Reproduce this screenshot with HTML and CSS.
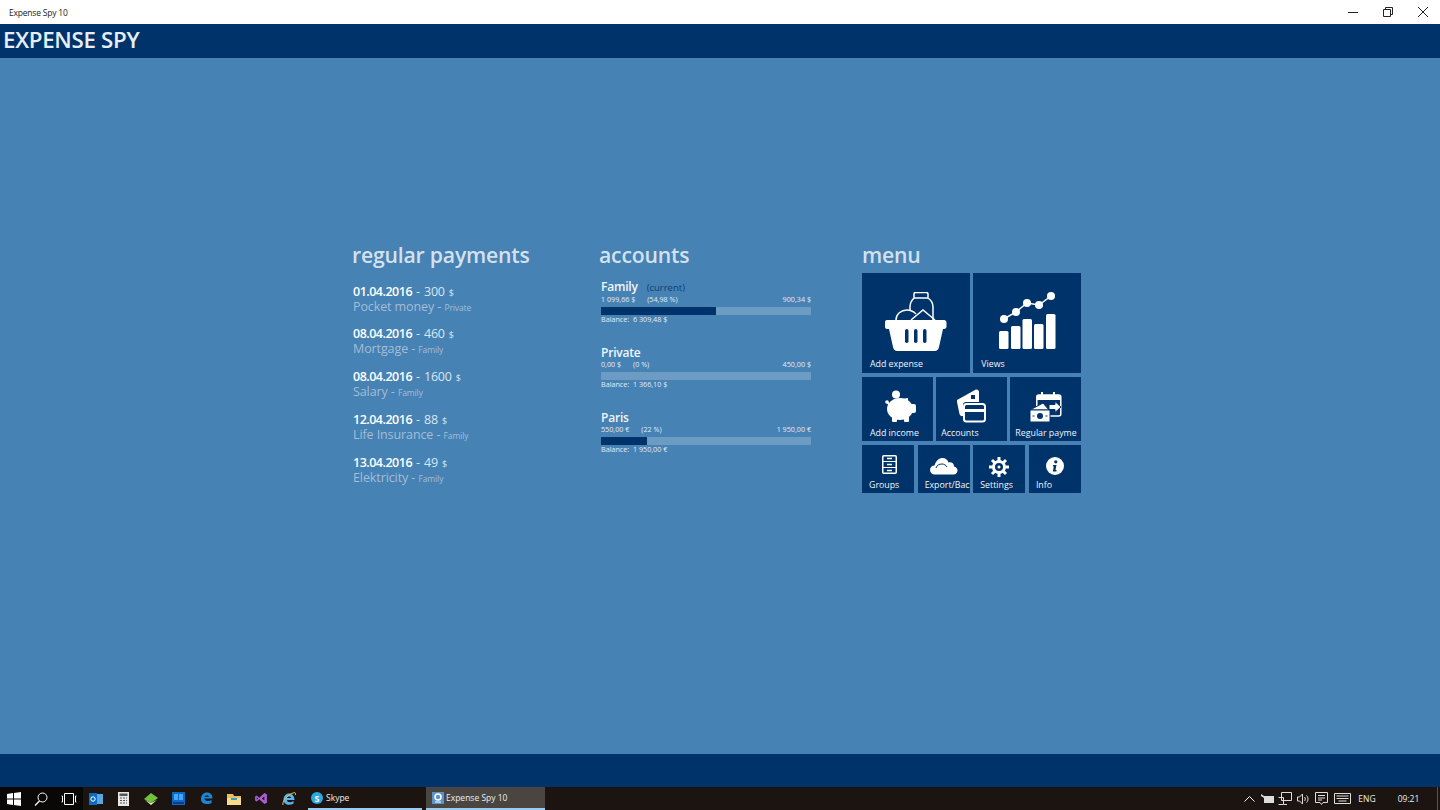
FILE: index.html
```html
<!DOCTYPE html>
<html lang="en">

<head>
    <meta charset="UTF-8">
    <meta name="viewport" content="width=device-width, initial-scale=1.0">
    <title>Expense Spy 10</title>
    <link rel="stylesheet" href="styles.css">
</head>

<body>
    <div class="titlebar">
        <span class="window-title">Expense Spy 10</span>
        <div class="window-buttons">
            <svg width="10" height="10" viewBox="0 0 10 10"><path d="M0 5.500h10" stroke="#222" fill="none"/></svg>
            <svg width="10" height="10" viewBox="0 0 10 10"><path d="M.5 2.500h7v7h-7zM2.500 2.500v-2h7v7h-2" stroke="#222" fill="none"/></svg>
            <svg width="10" height="10" viewBox="0 0 10 10"><path d="M0 0l10 10M10 0L0 10" stroke="#222" fill="none"/></svg>
        </div>
    </div>

    <header class="app-header">EXPENSE SPY</header>

    <main class="content">
        <section class="col col-payments">
            <h2>regular payments</h2>
            <div class="payment">
                <div class="pay-top"><b>01.04.2016</b> - 300 <small>$</small></div>
                <div class="pay-sub">Pocket money - <small>Private</small></div>
            </div>
            <div class="payment">
                <div class="pay-top"><b>08.04.2016</b> - 460 <small>$</small></div>
                <div class="pay-sub">Mortgage - <small>Family</small></div>
            </div>
            <div class="payment">
                <div class="pay-top"><b>08.04.2016</b> - 1600 <small>$</small></div>
                <div class="pay-sub">Salary - <small>Family</small></div>
            </div>
            <div class="payment">
                <div class="pay-top"><b>12.04.2016</b> - 88 <small>$</small></div>
                <div class="pay-sub">Life Insurance - <small>Family</small></div>
            </div>
            <div class="payment">
                <div class="pay-top"><b>13.04.2016</b> - 49 <small>$</small></div>
                <div class="pay-sub">Elektricity - <small>Family</small></div>
            </div>
        </section>

        <section class="col col-accounts">
            <h2>accounts</h2>
            <div class="account">
                <div class="acc-name">Family <span class="acc-current">(current)</span></div>
                <div class="acc-row"><span>1 099,66 $ <i>(54,98 %)</i></span><span>900,34 $</span></div>
                <div class="bar"><div class="bar-fill" style="width: 54.98%"></div></div>
                <div class="acc-balance">Balance:&nbsp; 6 309,48 $</div>
            </div>
            <div class="account">
                <div class="acc-name">Private</div>
                <div class="acc-row"><span>0,00 $ <i>(0 %)</i></span><span>450,00 $</span></div>
                <div class="bar"><div class="bar-fill" style="width: 0%"></div></div>
                <div class="acc-balance">Balance:&nbsp; 1 366,10 $</div>
            </div>
            <div class="account">
                <div class="acc-name">Paris</div>
                <div class="acc-row"><span>550,00 € <i>(22 %)</i></span><span>1 950,00 €</span></div>
                <div class="bar"><div class="bar-fill" style="width: 22%"></div></div>
                <div class="acc-balance">Balance:&nbsp; 1 950,00 €</div>
            </div>
        </section>

        <section class="col col-menu">
            <h2>menu</h2>
            <div class="tile-row row-big">
                <div class="tile">
                    <svg class="tile-icon" width="62" height="59" viewBox="0 0 62 59">
                        <path d="M29 6V2c0-1 .5-1.500 1.500-1.500h11c1 0 1.500.5 1.500 1.500v4c3 2 5 5 5 9v14M29 6c-2 2-4 5-4 9v3" fill="none" stroke="#fff" stroke-width="1.500"/>
                        <path d="M29 6h14" stroke="#fff" stroke-width="1.500"/>
                        <path d="M11 28c0-6 5-10 11-10 4 0 7 2 9 4" fill="none" stroke="#fff" stroke-width="1.500"/>
                        <path d="M26 28l12-10 12 10" fill="none" stroke="#fff" stroke-width="1.500"/>
                        <path d="M2 28h57c1.500 0 2.500 1 2.500 2.500v4c0 1.500-1 2.500-2.500 2.500h-1l-4 18c-.5 2.500-2 4-4.500 4h-37c-2.500 0-4-1.500-4.500-4L4 37H2c-1.500 0-2-1-2-2.500v-4C0 29 .5 28 2 28z" fill="#fff"/>
                        <rect x="20" y="37" width="3.500" height="14" rx="1.700" fill="#003369"/>
                        <rect x="29" y="37" width="3.500" height="14" rx="1.700" fill="#003369"/>
                        <rect x="38" y="37" width="3.500" height="14" rx="1.700" fill="#003369"/>
                    </svg>
                    <span class="tile-label">Add expense</span>
                </div>
                <div class="tile">
                    <svg class="tile-icon" width="57" height="58" viewBox="0 0 57 58">
                        <path d="M5 27l12-7 11-9 12 2 12-9" fill="none" stroke="#fff" stroke-width="1.500"/>
                        <circle cx="5" cy="27" r="4" fill="#fff"/>
                        <circle cx="17" cy="20" r="4" fill="#fff"/>
                        <circle cx="28" cy="11" r="4" fill="#fff"/>
                        <circle cx="40" cy="13" r="4" fill="#fff"/>
                        <circle cx="52" cy="4" r="4" fill="#fff"/>
                        <rect x="0" y="39" width="9.500" height="18" rx="1.500" fill="#fff"/>
                        <rect x="12" y="34" width="9.500" height="23" rx="1.500" fill="#fff"/>
                        <rect x="23.500" y="27" width="9.500" height="30" rx="1.500" fill="#fff"/>
                        <rect x="35" y="32" width="9.500" height="25" rx="1.500" fill="#fff"/>
                        <rect x="47" y="22" width="9.500" height="35" rx="1.500" fill="#fff"/>
                    </svg>
                    <span class="tile-label">Views</span>
                </div>
            </div>
            <div class="tile-row row-mid">
                <div class="tile">
                    <svg class="tile-icon icon-pig" width="32" height="34" viewBox="0 0 32 34">
                        <circle cx="11" cy="5.500" r="4" fill="#fff"/>
                        <ellipse cx="15" cy="20" rx="13" ry="11" fill="#fff"/>
                        <path d="M17 10l6-1v6z" fill="#fff"/>
                        <rect x="24" y="15" width="7" height="9" rx="2" fill="#fff"/>
                        <rect x="7" y="26" width="5" height="7" rx="1" fill="#fff"/>
                        <rect x="19" y="26" width="5" height="7" rx="1" fill="#fff"/>
                        <circle cx="2" cy="13" r="1.800" fill="#fff"/>
                        <path d="M2 13l3 3" stroke="#fff" stroke-width="2"/>
                    </svg>
                    <span class="tile-label">Add income</span>
                </div>
                <div class="tile">
                    <svg class="tile-icon" width="29" height="34" viewBox="0 0 29 34">
                        <path d="M0 11L18 1c2-1 4 0 4 2v10H9c-2 0-3 1-3 3v11c-2 .5-3-.5-3.500-2L0 13z" fill="#fff"/>
                        <rect x="14" y="6" width="4" height="4" fill="#003369"/>
                        <rect x="7" y="15" width="21" height="17.500" rx="2.500" fill="#003369" stroke="#fff" stroke-width="2"/>
                        <rect x="7" y="20" width="21" height="3" fill="#fff"/>
                    </svg>
                    <span class="tile-label label-tight">Accounts</span>
                </div>
                <div class="tile">
                    <svg class="tile-icon" width="33" height="34" viewBox="0 0 33 34">
                        <rect x="7.800" y="6" width="24" height="21" rx="2" fill="none" stroke="#fff" stroke-width="1.500"/>
                        <rect x="7.800" y="6" width="24" height="5" fill="#fff"/>
                        <path d="M13 3v5M25 3v5" stroke="#fff" stroke-width="2"/>
                        <path d="M20 15.500h6v-3l6 5.500-6 5.500v-3h-6z" fill="#fff" stroke="#003369"/>
                        <path d="M1 21l13-7 6 7z" fill="#fff" stroke="#003369"/>
                        <rect x="1" y="21" width="20" height="12" fill="#fff" stroke="#003369"/>
                        <circle cx="11" cy="27" r="3" fill="#003369"/>
                        <path d="M3.500 27h2M16.500 27h2" stroke="#003369"/>
                    </svg>
                    <span class="tile-label label-tight">Regular payme</span>
                </div>
            </div>
            <div class="tile-row row-small">
                <div class="tile">
                    <svg class="tile-icon icon-groups" width="15" height="19" viewBox="0 0 15 19">
                        <rect x=".75" y=".75" width="13.500" height="17.500" rx="1" fill="none" stroke="#fff" stroke-width="1.500"/>
                        <path d="M1 6.500h13M1 12.500h13" stroke="#fff"/>
                        <path d="M5 3.500h5M5 9.500h5M5 15.500h5" stroke="#fff" stroke-width="1.500"/>
                    </svg>
                    <span class="tile-label">Groups</span>
                </div>
                <div class="tile">
                    <svg class="tile-icon" width="29" height="18" viewBox="0 0 29 18">
                        <path d="M6 17.500c-3 0-5-2-5-4.500s2-4.500 4.500-4.500C7 3.500 10 1 13.500 1c3 0 5 1.500 6 4.500 1-.5 3-.5 4 .5s1.500 2 1.500 3.500c2 .5 3.500 2 3.500 4s-1.500 4-4 4z" fill="#fff"/>
                        <path d="M7 11c1-3 3-4 6-4 2 0 4 1 5 3" fill="none" stroke="#003369"/>
                    </svg>
                    <span class="tile-label">Export/Bac</span>
                </div>
                <div class="tile">
                    <svg class="tile-icon" width="20" height="20" viewBox="0 0 20 20">
                        <circle cx="10" cy="10" r="5.500" fill="none" stroke="#fff" stroke-width="3"/>
                        <circle cx="10" cy="10" r="1.500" fill="#fff"/>
                        <path d="M10 0v4M10 16v4M0 10h4M16 10h4M3 3l3 3M14 14l3 3M17 3l-3 3M6 14l-3 3" stroke="#fff" stroke-width="3"/>
                    </svg>
                    <span class="tile-label">Settings</span>
                </div>
                <div class="tile">
                    <svg class="tile-icon" width="18" height="18" viewBox="0 0 18 18">
                        <circle cx="9" cy="9" r="9" fill="#fff"/>
                        <circle cx="9.800" cy="4.800" r="1.600" fill="#003369"/>
                        <path d="M7 8h3.500l-1 5h1v1.500H6.800l1-5H7z" fill="#003369"/>
                    </svg>
                    <span class="tile-label">Info</span>
                </div>
            </div>
        </section>
    </main>

    <div class="app-footer"></div>

    <div class="taskbar">
        <div class="task-icons">
            <div class="task-icon task-icon-dark">
                <svg width="14" height="14" viewBox="0 0 14 14"><path d="M0 2l6-1v5.500H0zM7 1l7-1v6.500H7zM0 7.500h6V13l-6-1zM7 7.500h7V14l-7-1z" fill="#fff"/></svg>
            </div>
            <div class="task-icon task-icon-dark">
                <svg width="14" height="14" viewBox="0 0 14 14"><circle cx="8.500" cy="5.500" r="4.500" fill="none" stroke="#fff"/><path d="M5.500 9L1 13.500" stroke="#fff" stroke-width="1.300"/></svg>
            </div>
            <div class="task-icon task-icon-dark">
                <svg width="16" height="12" viewBox="0 0 16 12"><path d="M3.500.5h9v11h-9zM1.500 3v6M.5 3h1M.5 9h1M14.500 3v6M14.500 3h1M14.500 9h1" fill="none" stroke="#fff"/></svg>
            </div>
            <div class="task-icon">
                <svg width="14" height="14" viewBox="0 0 14 14"><rect x="4" y="2" width="10" height="10" fill="#5ba5e0"/><rect y="1" width="8" height="12" fill="#0a6cc0"/><circle cx="4" cy="7" r="2.200" fill="none" stroke="#fff"/></svg>
            </div>
            <div class="task-icon">
                <svg width="11" height="14" viewBox="0 0 11 14"><rect width="11" height="14" fill="#e8e8e8"/><rect x="1.500" y="1.500" width="8" height="2.500" fill="#555"/><path d="M2 6h2M5 6h2M8 6h1M2 8.500h2M5 8.500h2M8 8.500h1M2 11h2M5 11h2M8 11h1" stroke="#555"/></svg>
            </div>
            <div class="task-icon">
                <svg width="14" height="12" viewBox="0 0 14 12"><path d="M0 6l7-6 7 5-7 5z" fill="#6fc23a"/><path d="M1 7l6 5 6-5-6 3z" fill="#e8f0c0"/></svg>
            </div>
            <div class="task-icon">
                <svg width="13" height="13" viewBox="0 0 13 13"><rect width="13" height="13" fill="#0e68c8"/><rect x="2" y="2" width="4" height="6" fill="#44a8f0"/><rect x="7" y="2" width="4" height="6" fill="#44a8f0"/><rect x="1" y="10" width="11" height="2" fill="#123c80"/></svg>
            </div>
            <div class="task-icon">
                <svg width="13" height="13" viewBox="0 0 13 13"><path d="M1 7c0-4 2.500-6.500 6-6.500 3.500 0 5.500 2.500 5.500 6H4.500c.2 2.500 3.500 3.500 7 1.500v3c-3.500 2-10.500 1.500-10.500-4zM4.500 4.800H9C9 3 5 3 4.500 4.800z" fill="#1a86d8"/></svg>
            </div>
            <div class="task-icon">
                <svg width="14" height="12" viewBox="0 0 14 12"><path d="M0 1h6l1 2h7v2H0z" fill="#e8c060"/><path d="M0 5h14v7H0z" fill="#f5dc8c"/><rect x="4" y="5" width="6" height="2" fill="#3a9ad8"/></svg>
            </div>
            <div class="task-icon">
                <svg width="12" height="11" viewBox="0 0 14 13"><path d="M0 4l2-1 3 2.500L11 0l3 1.500v10L11 13 5 7.500 2 10l-2-1z" fill="#a860d0"/><path d="M11 4L8 6.500 11 9z" fill="#1c1410"/><path d="M2 5v3l1.500-1.500z" fill="#1c1410"/></svg>
            </div>
            <div class="task-icon">
                <svg width="14" height="14" viewBox="0 0 14 14"><path d="M1.500 8c0-4 2.500-6.500 5.500-6.500S12.500 4 12.500 8H5c0 2.500 3.500 3 6.500 1v2.500c-4 2.500-10 1-10-3.500zM5 6h4c0-2-3.500-2-4 0z" fill="#58b4ea"/><path d="M1 13C0 11 3 4 11 1c2-1 3 0 2.500 2" fill="none" stroke="#f0c040"/></svg>
            </div>
        </div>
        <div class="task-app">
            <svg width="12" height="12" viewBox="0 0 12 12"><circle cx="6" cy="6" r="6" fill="#2aa8e0"/><text x="6" y="9.500" class="skype-s">S</text></svg>
            <span>Skype</span>
        </div>
        <div class="task-app task-app-active">
            <svg width="12" height="12" viewBox="0 0 12 12"><rect width="12" height="12" fill="#5a94c8"/><circle cx="6" cy="5" r="3" fill="none" stroke="#fff" stroke-width="1.500"/><path d="M3 10h6" stroke="#fff"/></svg>
            <span>Expense Spy 10</span>
        </div>
        <div class="tray">
            <div class="tray-slot"><svg width="11" height="6" viewBox="0 0 11 6"><path d="M.5 5.500l5-5 5 5" fill="none" stroke="#fff"/></svg></div>
            <div class="tray-slot"><svg width="13" height="9" viewBox="0 0 13 9"><rect x="3" y="2" width="10" height="7" fill="#ddd"/><path d="M0 0l3 2v2L0 2z" fill="#ddd"/></svg></div>
            <div class="tray-slot"><svg width="14" height="13" viewBox="0 0 14 13"><path d="M3.500.5h10v8h-10zM.5 5.500h5v7h-5M6 12.500h3" fill="none" stroke="#ddd"/></svg></div>
            <div class="tray-slot"><svg width="13" height="12" viewBox="0 0 13 12"><path d="M.5 4h2l3-3v10l-3-3h-2zM7.500 4c1 1 1 3 0 4M9.500 2.500c2 2 2 5 0 7" fill="none" stroke="#ddd"/></svg></div>
            <div class="tray-slot"><svg width="13" height="14" viewBox="0 0 13 14"><path d="M.5.500h12v10H8l-1.500 2-1.500-2H.5zM3 3.500h7M3 6h7M3 8h4" fill="none" stroke="#ddd"/></svg></div>
            <div class="tray-slot tray-keyboard"><svg width="17" height="11" viewBox="0 0 17 11"><path d="M.5.500h16v10H.5zM2.500 3h12M2.500 5.500h12M4.500 8h8" fill="none" stroke="#ddd"/></svg></div>
            <span class="tray-slot tray-lang">ENG</span>
            <span class="tray-slot tray-clock">09:21</span>
        </div>
    </div>
</body>

</html>
```

FILE: styles.css
```css
* {
    box-sizing: border-box;
}

body {
    font-family: "Open Sans", "Noto Sans", sans-serif;
    margin: 0;
    height: 810px;
    display: flex;
    flex-direction: column;
    overflow: hidden;
    background-color: #4682b4;
    color: #fff;
}

.titlebar {
    height: 24px;
    display: flex;
    align-items: center;
    justify-content: space-between;
    background-color: #fff;
    color: #222;
    padding-left: 9px;
}

.window-title {
    font-size: 8.500px;
    letter-spacing: -0.2px;
}

.window-buttons {
    display: flex;
    gap: 25px;
    padding-right: 12px;
}

.app-header {
    height: 34px;
    background-color: #003369;
    color: #e8eef5;
    font-size: 22.300px;
    line-height: 31px;
    font-weight: 600;
    padding-left: 3px;
    letter-spacing: -0.3px;
}

.content {
    flex: 1;
    display: flex;
    align-items: flex-start;
    padding: 183px 0 0 352px;
}

.col h2 {
    margin: 0;
    font-size: 21.200px;
    line-height: 28px;
    font-weight: 600;
    color: #d4e1ec;
    letter-spacing: -0.2px;
}

.col-payments {
    width: 247px;
}

.col-accounts {
    width: 263px;
}

.col-accounts h2 {
    margin-bottom: 10px;
}

.col-payments h2 {
    margin-bottom: 14.500px;
}

.payment {
    margin: 0 0 11.800px 1px;
}

.pay-top {
    font-size: 12.500px;
    line-height: 15px;
    color: #d8e6f2;
    letter-spacing: -0.2px;
    word-spacing: 1px;
}

.pay-top b {
    color: #fff;
    font-weight: 600;
    letter-spacing: -0.5px;
}

.pay-top small {
    font-size: 9px;
    line-height: 1;
}

.pay-sub {
    font-size: 12.500px;
    line-height: 16px;
    color: #a3bed6;
    letter-spacing: -0.1px;
}

.pay-sub small {
    font-size: 8.500px;
    line-height: 1;
}

.account {
    width: 210px;
    margin: 0 0 21px 2px;
}

.acc-name {
    font-size: 12px;
    line-height: 15px;
    font-weight: 600;
    color: #f2f6fa;
    letter-spacing: -0.2px;
}

.acc-current {
    font-size: 9.500px;
    font-weight: 400;
    color: #0f3f78;
    margin-left: 6px;
    letter-spacing: 0;
}

.acc-row {
    display: flex;
    justify-content: space-between;
    font-size: 7.200px;
    line-height: 9px;
    color: #e2ecf5;
    margin-bottom: 3px;
}

.acc-row i {
    font-style: normal;
    margin-left: 10px;
}

.bar {
    height: 8px;
    background-color: #6c9cc4;
}

.bar-fill {
    height: 100%;
    background-color: #003369;
}

.acc-balance {
    font-size: 7.200px;
    line-height: 9px;
    color: #e2ecf5;
}

.col-menu {
    width: 219px;
}

.col-menu h2 {
    margin-bottom: 4px;
}

.tile-row {
    display: flex;
    gap: 3.500px;
    margin-bottom: 4px;
}

.tile {
    flex: 1 1 0;
    min-width: 0;
    position: relative;
    background-color: #003369;
    display: flex;
    flex-direction: column;
    align-items: center;
    overflow: hidden;
}

.row-big .tile {
    height: 100px;
    padding-top: 19px;
}

.row-mid .tile {
    height: 64px;
    padding-top: 12px;
}

.row-small .tile {
    height: 48px;
    padding-top: 12px;
}

.icon-pig {
    margin-left: 8px;
}

.icon-groups {
    margin-top: -2px;
    margin-left: 3px;
}

/* labels sit at the bottom left of the tile */
.tile-label {
    position: absolute;
    left: 8px;
    bottom: 3px;
    font-size: 8.800px;
    line-height: 12px;
    white-space: nowrap;
    color: #f2f6fa;
}

.row-mid .tile-label {
    bottom: 2px;
}

.row-mid .label-tight {
    left: 5px;
}

.row-small .tile-label {
    left: 7px;
    bottom: 2px;
}

.app-footer {
    height: 33px;
    background-color: #003369;
}

.taskbar {
    height: 23px;
    display: flex;
    align-items: stretch;
    background-color: #1c1410;
    font-size: 8.500px;
    color: #eee;
}

.task-icons {
    width: 303px;
    display: flex;
}

.task-icon {
    width: 27.500px;
    display: flex;
    align-items: center;
    justify-content: center;
}

.task-icon-dark {
    background-color: #0a0806;
}

.task-app {
    width: 114px;
    margin: 0 4px 0 5px;
    display: flex;
    align-items: center;
    gap: 3px;
    padding-left: 3px;
    border-bottom: 2px solid #9ccbef;
}

.task-app-active {
    width: 119px;
    margin: 0;
    background-color: #4a4540;
    padding-left: 6px;
    gap: 2px;
}

.skype-s {
    font-size: 9px;
    font-weight: 700;
    fill: #fff;
    text-anchor: middle;
}

.tray {
    flex: 1;
    display: flex;
    justify-content: flex-end;
    padding-right: 2px;
}

.tray-slot {
    width: 18px;
    display: flex;
    align-items: center;
    justify-content: center;
}

.tray-keyboard {
    width: 24px;
}

.tray-lang {
    width: 26px;
}

.tray-clock {
    width: 58px;
    border-right: 1px solid #555;
}
```
